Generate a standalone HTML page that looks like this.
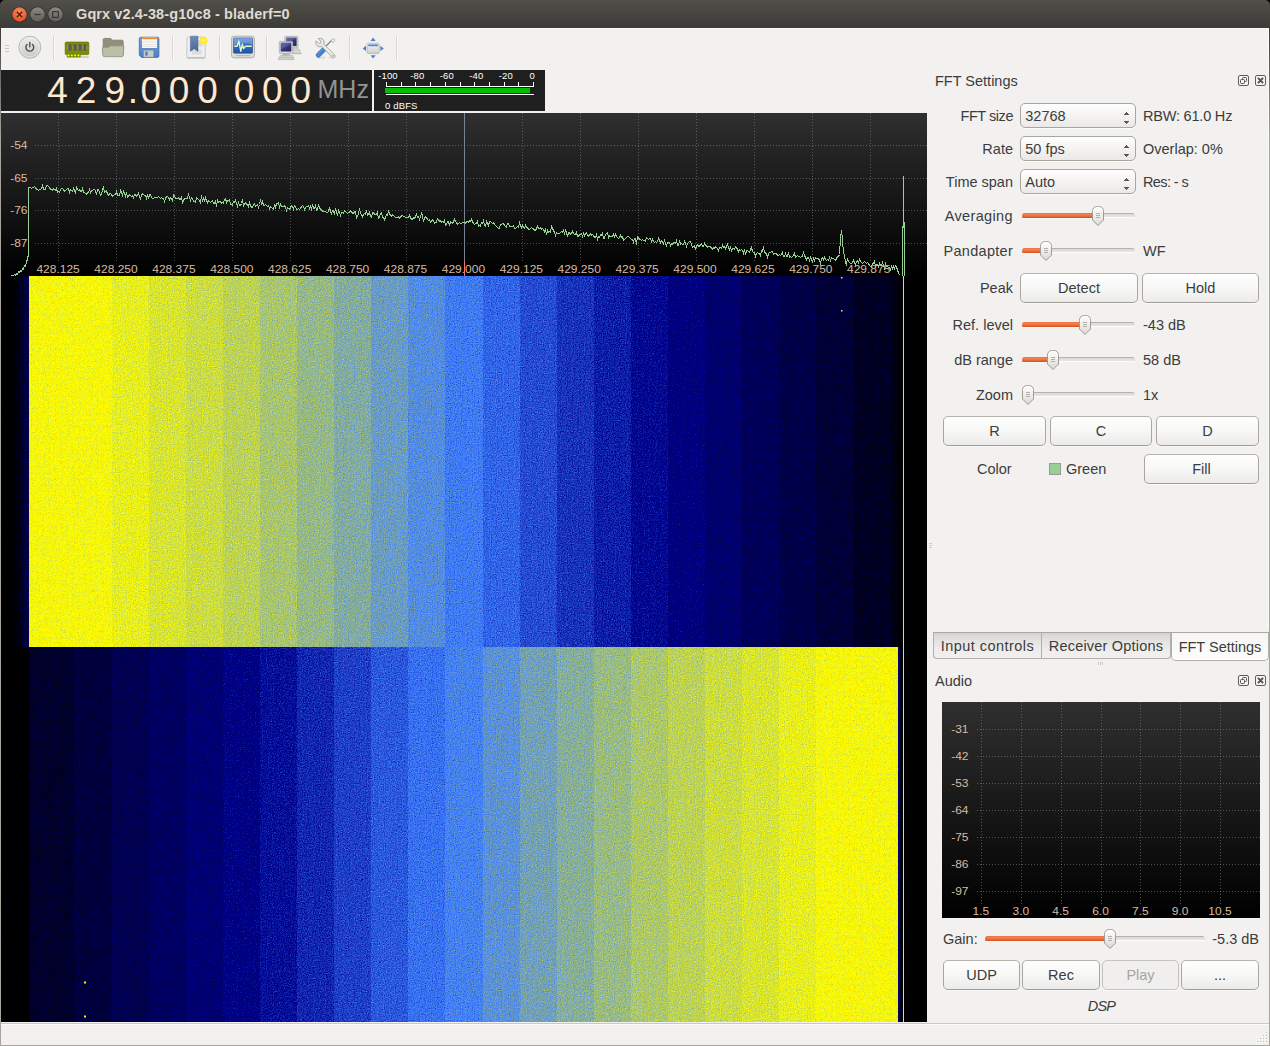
<!DOCTYPE html>
<html><head><meta charset="utf-8"><title>Gqrx v2.4-38-g10c8 - bladerf=0</title>
<style>
html,body{margin:0;padding:0}
body{width:1270px;height:1046px;position:relative;overflow:hidden;background:#f2f1f0;font-family:"Liberation Sans",sans-serif;font-size:14.5px;color:#3c3c3c}
.abs{position:absolute}
#titlebar{left:0;top:0;width:1270px;height:28px;background:linear-gradient(#504f49,#3c3b37);border-radius:5px 5px 0 0;box-shadow:0 1px 0 #fbfbfa}
#corn{left:0;top:0;width:1270px;height:8px;background:#000}
#title{left:76px;top:5.5px;color:#dfdbd2;font-weight:bold;font-size:14.5px;white-space:nowrap;letter-spacing:0.1px}
#freq{left:1px;top:70px;width:371px;height:41px;background:#1f1f1f}
.dg{top:0;width:30px;text-align:center;font-size:37px;line-height:41px;color:#ffe8cf}
#mhz{left:316.5px;top:0;font-size:25px;line-height:39px;color:#939393}
#meter{left:374px;top:70px;width:171px;height:41px;background:#1f1f1f}
.mt{font-family:"Liberation Sans",sans-serif;font-size:9.5px;letter-spacing:0.15px;fill:#fff}
.lb{line-height:20px;white-space:nowrap}
.combo{border:1px solid #a9a6a0;border-radius:5px;background:linear-gradient(#fefefe,#ebe9e7);box-shadow:0 1px 0 #fbfbfa}
.btn{border:1px solid #aaa7a1;border-top-color:#b6b3ad;border-bottom-color:#a09d97;border-radius:5px;background:linear-gradient(#fefefe 0%,#f7f7f6 50%,#ecebea 100%);text-align:center;box-shadow:0 1px 0 rgba(255,255,255,.6)}
.btn.dis{color:#a6a5a3;border-color:#c6c3be;background:#f0efed}
.grv{height:6px;border-radius:3px;background:linear-gradient(#b6b3ad 0,#b6b3ad 1px,#dbd9d5 1px,#e7e5e2 4px,#fcfcfb 4px,#fcfcfb 5px,#f5f4f3 5px)}
.grf{height:6px;border-radius:3px 0 0 3px;background:linear-gradient(#ea7445 0,#f0804f 1.500px,#ec7040 3px,#d24e1a 5px,#fcfcfb 5px,#f8f7f6 6px)}
.tab{border:1px solid #b2afa9;border-top:none;background:linear-gradient(#d6d3cf 0%,#e3e1de 25%,#efeeec 70%,#f1f0ee 100%);text-align:center;line-height:26px;white-space:nowrap}
.tabsel{border:1px solid #b2afa9;border-top:none;border-radius:0 0 5px 5px;background:linear-gradient(#f5f5f4,#fdfdfd);text-align:center;line-height:28px;white-space:nowrap}
</style></head><body>
<div id="corn" class="abs"></div><div id="titlebar" class="abs"></div>
<div id="title" class="abs">Gqrx v2.4-38-g10c8 - bladerf=0</div>

<svg class="abs" style="left:0;top:0" width="640" height="70" viewBox="0 0 640 70">
<defs>
<radialGradient id="gClose" cx="0.5" cy="0.3" r="0.8"><stop offset="0" stop-color="#f58a5e"/><stop offset="1" stop-color="#df4a1b"/></radialGradient>
<linearGradient id="gBtn" x1="0" y1="0" x2="0" y2="1"><stop offset="0" stop-color="#8a8983"/><stop offset="1" stop-color="#5f5e58"/></linearGradient>
<linearGradient id="gPow" x1="0" y1="0" x2="0" y2="1"><stop offset="0" stop-color="#ececec"/><stop offset="1" stop-color="#c9c9c9"/></linearGradient>
<linearGradient id="gFlop" x1="0" y1="0" x2="0" y2="1"><stop offset="0" stop-color="#74a3dc"/><stop offset="1" stop-color="#4c7ec2"/></linearGradient>
<linearGradient id="gScr" x1="0" y1="0" x2="0" y2="1"><stop offset="0" stop-color="#5b8ddb"/><stop offset="0.45" stop-color="#3468bf"/><stop offset="1" stop-color="#2456a8"/></linearGradient>
<linearGradient id="gRib" x1="0" y1="0" x2="0" y2="1"><stop offset="0" stop-color="#6f8db6"/><stop offset="1" stop-color="#4a6892"/></linearGradient>
<linearGradient id="gPc" x1="0" y1="0" x2="1" y2="1"><stop offset="0" stop-color="#5a59a0"/><stop offset="0.5" stop-color="#37367a"/><stop offset="1" stop-color="#24245c"/></linearGradient>
<radialGradient id="gStar"><stop offset="0" stop-color="#fffbd0"/><stop offset="0.35" stop-color="#ffee3a"/><stop offset="0.8" stop-color="#ffe92e"/><stop offset="1" stop-color="#ffe92e" stop-opacity="0"/></radialGradient>
<linearGradient id="gWin" x1="0" y1="0" x2="0" y2="1"><stop offset="0" stop-color="#f4f4f4"/><stop offset="1" stop-color="#d0d0d0"/></linearGradient>
</defs>
<!-- window buttons -->
<circle cx="19.5" cy="14.5" r="8" fill="#33322d"/><circle cx="19.5" cy="14.5" r="7.2" fill="url(#gClose)"/>
<path d="M16.8 11.8l5.4 5.4M22.2 11.8l-5.4 5.4" stroke="#4a1e0c" stroke-width="1.3" fill="none"/>
<circle cx="37.5" cy="14.5" r="8" fill="#33322d"/><circle cx="37.5" cy="14.5" r="7.2" fill="url(#gBtn)"/>
<path d="M34.3 14.5h6.4" stroke="#3a3935" stroke-width="1.3"/>
<circle cx="55.5" cy="14.5" r="8" fill="#33322d"/><circle cx="55.5" cy="14.5" r="7.2" fill="url(#gBtn)"/>
<rect x="52.6" y="11.6" width="5.8" height="5.8" fill="none" stroke="#3a3935" stroke-width="1.2"/>
<!-- grip -->
<rect x="5" y="45" width="4" height="1" fill="#c9c6c0"/><rect x="5" y="48" width="4" height="1" fill="#c9c6c0"/><rect x="5" y="51" width="4" height="1" fill="#c9c6c0"/>
<!-- power -->
<circle cx="29.8" cy="47.3" r="11" fill="url(#gPow)" stroke="#b9b9b2" stroke-width="1"/>
<circle cx="29.8" cy="47.3" r="9.6" fill="none" stroke="#f4f4f4" stroke-width="0.8" opacity=".7"/>
<path d="M27.100 44.400a3.900 3.900 0 1 0 5.400 0" fill="none" stroke="#4d4d4d" stroke-width="1.400" stroke-linecap="round"/>
<path d="M29.800 42.400v4.400" stroke="#4d4d4d" stroke-width="1.400" stroke-linecap="round"/>
<!-- separators -->
<g fill="#d8d5d0"><rect x="53" y="36" width="1" height="24"/><rect x="172" y="36" width="1" height="24"/><rect x="219" y="36" width="1" height="24"/><rect x="266" y="36" width="1" height="24"/><rect x="349" y="36" width="1" height="24"/><rect x="396" y="36" width="1" height="24"/></g>
<g fill="#fbfbfa"><rect x="54" y="36" width="1" height="24"/><rect x="173" y="36" width="1" height="24"/><rect x="220" y="36" width="1" height="24"/><rect x="267" y="36" width="1" height="24"/><rect x="350" y="36" width="1" height="24"/><rect x="397" y="36" width="1" height="24"/></g>
<!-- RAM -->
<rect x="67" y="56" width="22" height="2" rx="1" fill="#c8c8c4" opacity=".8"/>
<rect x="65.2" y="42.1" width="23.6" height="12.5" rx="1.2" fill="#7c8a04" stroke="#6a7700" stroke-width=".8"/>
<rect x="66.8" y="53.5" width="13.8" height="3.8" fill="#6f7d00"/>
<g fill="#5a5a55"><rect x="68.2" y="44.3" width="3.4" height="6.4" rx=".8"/><rect x="73.2" y="44.3" width="3.4" height="6.4" rx=".8"/><rect x="78.2" y="44.3" width="3.4" height="6.4" rx=".8"/><rect x="83.2" y="44.3" width="3.4" height="6.4" rx=".8"/></g>
<g fill="#9a9a94"><rect x="67.6" y="45.5" width=".8" height="4"/><rect x="72.6" y="45.5" width=".8" height="4"/><rect x="77.6" y="45.5" width=".8" height="4"/><rect x="82.6" y="45.5" width=".8" height="4"/><rect x="86.4" y="45.5" width=".8" height="4"/></g>
<g fill="#e6ff00"><circle cx="68.5" cy="55.4" r="1.1"/><circle cx="71.8" cy="55.4" r="1.1"/><circle cx="75.1" cy="55.4" r="1.1"/><circle cx="78.4" cy="55.4" r="1.1"/></g>
<!-- folder -->
<path d="M103.2 39.6q0-1.2 1.2-1.2h6.4l1.6 1.8h9.6q1.2 0 1.2 1.2v13.6h-20z" fill="#8f917b" stroke="#787a66" stroke-width=".8"/>
<path d="M102.3 48.2q0-1 1-1h5.6l1.4-1.4h12.6q1.1 0 1 1.1l-.7 8.6q-.1 1.2-1.3 1.2h-17.6q-1.2 0-1.3-1.2z" fill="#bcbfa8" stroke="#8c8e78" stroke-width=".8"/>
<!-- floppy -->
<path d="M139.3 38.6q0-1.4 1.4-1.4h16.8q1.4 0 1.4 1.4v17.4q0 1.4-1.4 1.4h-15.8l-2.4-2.2z" fill="url(#gFlop)" stroke="#3f6aa8" stroke-width=".8"/>
<rect x="142" y="37.4" width="15" height="10.6" fill="#fafafa"/>
<rect x="142" y="37.4" width="15" height="1.8" fill="#f0891c"/>
<rect x="142" y="41.6" width="15" height=".7" fill="#d8d8d8"/><rect x="142" y="44" width="15" height=".7" fill="#d8d8d8"/><rect x="142" y="46.2" width="15" height=".7" fill="#d8d8d8"/>
<rect x="143.8" y="50.4" width="9.6" height="6.6" fill="#c9cbc6" stroke="#9fa19c" stroke-width=".5"/>
<rect x="145.3" y="51.6" width="2.4" height="4" fill="#4c7ec2"/>
<!-- bookmark -->
<rect x="186.9" y="37.2" width="18.3" height="21" rx="1" fill="#efefef" stroke="#c4c4c4" stroke-width=".9"/>
<rect x="187" y="57" width="18" height="1.4" fill="#c0c0c0"/>
<rect x="198" y="40" width="4.5" height="7" fill="#dcdcdc"/><rect x="192" y="49.5" width="9.5" height="5" fill="#dcdcdc"/>
<path d="M190.4 36.2h7.6v15.2l-3.8-2.6-3.8 2.6z" fill="url(#gRib)" stroke="#4a6892" stroke-width=".5"/>
<circle cx="203.6" cy="40.6" r="4.4" fill="url(#gStar)"/>
<!-- monitor -->
<rect x="231.6" y="36.2" width="22.8" height="21.6" rx="2.2" fill="#dedede" stroke="#a9a9a5" stroke-width=".9"/>
<rect x="233.5" y="38" width="19" height="15.2" rx=".8" fill="url(#gScr)" stroke="#1f4a94" stroke-width=".6"/>
<path d="M233.600 38.100h18.800v6.500q-9.400-3-18.800 1z" fill="#fff" opacity=".22"/><path d="M234.200 46.300h2.900l1.800-5.200 1.900 10.200 1.600-7.100 1.200 4.400 1.900-2.300h6.300" fill="none" stroke="#dcf9c6" stroke-width="1.400" stroke-linejoin="round"/>
<rect x="236" y="55" width="14" height="1.2" fill="#b8b8b4"/>
<!-- network pcs -->
<rect x="284.8" y="36.4" width="13.2" height="11.4" rx=".8" fill="#d8d8d4" stroke="#a4a4a0" stroke-width=".7"/>
<rect x="286.200" y="37.600" width="10.400" height="8.400" fill="url(#gPc)"/><path d="M286.200 43.500l10.400-5v-.9h-10.400z" fill="#8584c4" opacity=".35"/>
<path d="M292.800 48h4.400l3.400 2.600h-7.800z" fill="#d6d6d2" stroke="#a4a4a0" stroke-width=".5"/><path d="M293 52.200h7.500l1 1.800h-8.500z" fill="#d0d0cc" stroke="#a8a8a4" stroke-width=".5"/>
<rect x="279.3" y="41.4" width="13.4" height="12" rx=".8" fill="#dcdcd8" stroke="#a4a4a0" stroke-width=".7"/>
<rect x="280.700" y="42.700" width="10.600" height="8.800" fill="url(#gPc)"/><path d="M280.700 49.500l10.600-5.500v-1.300h-10.600z" fill="#8584c4" opacity=".35"/>
<rect x="282.5" y="53.6" width="7" height="1.6" fill="#b4b4b0"/>
<path d="M280.4 55.4h12l1.8 4.2h-16.2z" fill="#d4d4d0" stroke="#a4a4a0" stroke-width=".6"/>
<path d="M279.6 57.4h13.6" stroke="#aaa" stroke-width=".6"/>
<!-- tools -->
<ellipse cx="321" cy="57.600" rx="4.500" ry="1" fill="#c9c8c4" opacity=".6"/><ellipse cx="332" cy="57.600" rx="3.500" ry="1" fill="#c9c8c4" opacity=".6"/>
<path d="M323.800 48.300l7.900-7.900" stroke="#7d7f7b" stroke-width="1.300" fill="none"/>
<path d="M331 40.300l2.800-1.700 1.200 1.200-1.700 2.800z" fill="#f4f5f3" stroke="#8e908c" stroke-width=".6" stroke-linejoin="round"/>
<g transform="translate(320,42.600) rotate(45)"><path d="M-4.030-1.500A4.300 4.300 0 0 1 3.990-1.600L19-1.600A1.600 1.600 0 0 1 19 1.600L3.990 1.600A4.300 4.300 0 0 1-4.030 1.500L-.800 1.500A1.500 1.500 0 0 0-.800-1.500Z" fill="#e6e8e4" stroke="#9b9d99" stroke-width=".8" stroke-linejoin="round"/><circle cx="18.400" cy="0" r=".7" fill="#a5a7a3"/><path d="M5 -.5H16" stroke="#fff" stroke-width=".8" opacity=".7"/></g>
<path d="M322.300 48.100l3 3-5.300 5.500a2.200 2.200 0 0 1-3.300-2.900z" fill="#4383d2" stroke="#2f66b0" stroke-width=".8" stroke-linejoin="round"/>
<path d="M318.200 53.600l4-4.200" stroke="#7fb0ea" stroke-width=".9" stroke-linecap="round" opacity=".7"/>
<!-- fullscreen -->
<rect x="367" y="43.200" width="12.200" height="10.200" rx="1" fill="url(#gWin)" stroke="#b4b4b0" stroke-width=".8"/>
<rect x="368.200" y="44.400" width="9.800" height="1.800" fill="#5a88cc"/>
<g fill="#4f80c6"><path d="M373.100 37.600l2.600 3.400h-5.200z"/><path d="M373.100 58.600l2.600-3.400h-5.200z"/><path d="M362.600 48.400l3.400-2.600v5.200z"/><path d="M383.800 48.400l-3.400-2.600v5.200z"/></g>
</svg>

<div id="freq" class="abs"><span class="abs dg" style="left:41.5px">4</span><span class="abs dg" style="left:70.0px">2</span><span class="abs dg" style="left:98.7px">9</span><span class="abs dg" style="left:117.0px">.</span><span class="abs dg" style="left:134.7px">0</span><span class="abs dg" style="left:163.0px">0</span><span class="abs dg" style="left:191.5px">0</span><span class="abs dg" style="left:228.0px">0</span><span class="abs dg" style="left:256.4px">0</span><span class="abs dg" style="left:284.7px">0</span><span class="abs" id="mhz">MHz</span></div>
<div id="meter" class="abs"><svg width="171" height="41" viewBox="374 70 171 41" style="position:absolute;left:0;top:0"><rect x="386" y="82" width="1" height="5" fill="#fff"/><rect x="401" y="82" width="1" height="5" fill="#fff"/><rect x="415" y="82" width="1" height="5" fill="#fff"/><rect x="430" y="82" width="1" height="5" fill="#fff"/><rect x="445" y="82" width="1" height="5" fill="#fff"/><rect x="460" y="82" width="1" height="5" fill="#fff"/><rect x="474" y="82" width="1" height="5" fill="#fff"/><rect x="489" y="82" width="1" height="5" fill="#fff"/><rect x="504" y="82" width="1" height="5" fill="#fff"/><rect x="518" y="82" width="1" height="5" fill="#fff"/><rect x="533" y="82" width="1" height="5" fill="#fff"/><rect x="386" y="86" width="148" height="1" fill="#fff"/><rect x="385" y="88" width="145" height="5" fill="#00c000"/><rect x="386" y="94" width="148" height="1" fill="#fff"/><text x="388.0" y="78.6" text-anchor="middle" class="mt">-100</text><text x="417.4" y="78.6" text-anchor="middle" class="mt">-80</text><text x="446.9" y="78.6" text-anchor="middle" class="mt">-60</text><text x="476.3" y="78.6" text-anchor="middle" class="mt">-40</text><text x="505.8" y="78.6" text-anchor="middle" class="mt">-20</text><text x="532.2" y="78.6" text-anchor="middle" class="mt">0</text><text x="385" y="109" class="mt">0 dBFS</text></svg></div>
<svg class="abs" style="left:0;top:0" width="1270" height="1046" viewBox="0 0 1270 1046">
<defs>
<filter id="wfF" x="0" y="0" width="1" height="1" filterUnits="objectBoundingBox" color-interpolation-filters="sRGB">
<feTurbulence type="fractalNoise" baseFrequency="0.83" numOctaves="2" seed="3" result="t"/>
<feColorMatrix in="t" type="matrix" values=".3333 .3333 .3333 0 0  .3333 .3333 .3333 0 0  .3333 .3333 .3333 0 0  0 0 0 0 1" result="n"/>
<feComposite in="SourceGraphic" in2="n" operator="arithmetic" k1="0" k2="1" k3="0.24" k4="-0.12" result="m"/>
<feComponentTransfer in="m">
<feFuncR type="table" tableValues="0.0000 0.0000 0.0000 0.0000 0.0000 0.0000 0.0000 0.0000 0.0000 0.0000 0.0000 0.0000 0.0000 0.0000 0.0000 0.0392 0.0784 0.1176 0.1569 0.1961 0.2353 0.3118 0.3882 0.4647 0.5412 0.6176 0.6941 0.7706 0.8471 0.9235 1.0000 1.0000 1.0000 1.0000 1.0000 1.0000 1.0000 1.0000 1.0000 1.0000 1.0000 1.0000 1.0000 1.0000 1.0000 1.0000 1.0000 1.0000 1.0000 1.0000 1.0000 1.0000"/>
<feFuncG type="table" tableValues="0.0000 0.0000 0.0000 0.0000 0.0000 0.0000 0.0000 0.0000 0.0000 0.0000 0.0000 0.0000 0.0000 0.0000 0.0000 0.0817 0.1634 0.2451 0.3268 0.4085 0.4902 0.5412 0.5922 0.6431 0.6941 0.7451 0.7961 0.8471 0.8980 0.9490 1.0000 0.9500 0.9000 0.8500 0.8000 0.7500 0.7000 0.6500 0.6000 0.5500 0.5000 0.4500 0.4000 0.3500 0.3000 0.2500 0.2000 0.1500 0.1000 0.0500 0.0000 1.0000"/>
<feFuncB type="table" tableValues="0.0000 0.0000 0.0000 0.0000 0.0000 0.0549 0.1098 0.1647 0.2196 0.2745 0.3294 0.3843 0.4392 0.4941 0.5490 0.6242 0.6993 0.7745 0.8497 0.9248 1.0000 0.9000 0.8000 0.7000 0.6000 0.5000 0.4000 0.3000 0.2000 0.1000 0.0000 0.0000 0.0000 0.0000 0.0000 0.0000 0.0000 0.0000 0.0000 0.0000 0.0000 0.0000 0.0000 0.0000 0.0000 0.0000 0.0000 0.0000 0.0000 0.0000 0.0000 1.0000"/>
</feComponentTransfer>
</filter>
<linearGradient id="glowL" x1="0" y1="0" x2="1" y2="0"><stop offset="0" stop-color="#0d0d0d"/><stop offset="0.5" stop-color="#1c1c1c"/><stop offset="1" stop-color="#323232"/></linearGradient><linearGradient id="glowR" x1="0" y1="0" x2="1" y2="0"><stop offset="0" stop-color="#464646"/><stop offset="1" stop-color="#161616"/></linearGradient>
<linearGradient id="pbg" x1="0" y1="0" x2="0" y2="1"><stop offset="0" stop-color="#2f2f2f"/><stop offset="1" stop-color="#000"/></linearGradient>
<style>.grid{stroke:#8a8a8a;stroke-width:1;stroke-dasharray:1 2;opacity:.55}.pl{font-family:"Liberation Sans",sans-serif;font-size:12px;fill:#d8baa1}</style>
</defs>
<g filter="url(#wfF)" shape-rendering="crispEdges">
<rect x="1" y="276" width="926" height="746" fill="#0d0d0d"/>
<rect x="29" y="276" width="45" height="371" fill="#949494"/>
<rect x="74" y="276" width="38" height="371" fill="#949494"/>
<rect x="112" y="276" width="37" height="371" fill="#909090"/>
<rect x="149" y="276" width="37" height="371" fill="#8c8c8c"/>
<rect x="186" y="276" width="37" height="371" fill="#898989"/>
<rect x="223" y="276" width="37" height="371" fill="#858585"/>
<rect x="260" y="276" width="37" height="371" fill="#808080"/>
<rect x="297" y="276" width="37" height="371" fill="#7b7b7b"/>
<rect x="334" y="276" width="37" height="371" fill="#767676"/>
<rect x="371" y="276" width="37" height="371" fill="#707070"/>
<rect x="408" y="276" width="37" height="371" fill="#6a6a6a"/>
<rect x="445" y="276" width="38" height="371" fill="#646464"/>
<rect x="483" y="276" width="37" height="371" fill="#5e5e5e"/>
<rect x="520" y="276" width="37" height="371" fill="#585858"/>
<rect x="557" y="276" width="37" height="371" fill="#525252"/>
<rect x="594" y="276" width="37" height="371" fill="#4d4d4d"/>
<rect x="631" y="276" width="37" height="371" fill="#474747"/>
<rect x="668" y="276" width="37" height="371" fill="#414141"/>
<rect x="705" y="276" width="37" height="371" fill="#3b3b3b"/>
<rect x="742" y="276" width="37" height="371" fill="#343434"/>
<rect x="779" y="276" width="37" height="371" fill="#2e2e2e"/>
<rect x="816" y="276" width="38" height="371" fill="#282828"/>
<rect x="854" y="276" width="37" height="371" fill="#212121"/>
<rect x="891" y="276" width="7" height="371" fill="#1b1b1b"/>
<rect x="29" y="647" width="45" height="375" fill="#242424"/>
<rect x="74" y="647" width="38" height="375" fill="#2a2a2a"/>
<rect x="112" y="647" width="37" height="375" fill="#313131"/>
<rect x="149" y="647" width="37" height="375" fill="#373737"/>
<rect x="186" y="647" width="37" height="375" fill="#3d3d3d"/>
<rect x="223" y="647" width="37" height="375" fill="#434343"/>
<rect x="260" y="647" width="37" height="375" fill="#494949"/>
<rect x="297" y="647" width="37" height="375" fill="#4f4f4f"/>
<rect x="334" y="647" width="37" height="375" fill="#555555"/>
<rect x="371" y="647" width="37" height="375" fill="#5b5b5b"/>
<rect x="408" y="647" width="37" height="375" fill="#616161"/>
<rect x="445" y="647" width="38" height="375" fill="#666666"/>
<rect x="483" y="647" width="37" height="375" fill="#6c6c6c"/>
<rect x="520" y="647" width="37" height="375" fill="#727272"/>
<rect x="557" y="647" width="37" height="375" fill="#777777"/>
<rect x="594" y="647" width="37" height="375" fill="#7c7c7c"/>
<rect x="631" y="647" width="37" height="375" fill="#818181"/>
<rect x="668" y="647" width="37" height="375" fill="#858585"/>
<rect x="705" y="647" width="37" height="375" fill="#898989"/>
<rect x="742" y="647" width="37" height="375" fill="#8c8c8c"/>
<rect x="779" y="647" width="37" height="375" fill="#909090"/>
<rect x="816" y="647" width="38" height="375" fill="#949494"/>
<rect x="854" y="647" width="37" height="375" fill="#949494"/>
<rect x="891" y="647" width="7" height="375" fill="#949494"/>
<rect x="9" y="276" width="20" height="371" fill="url(#glowL)"/>
<rect x="898" y="647" width="3" height="375" fill="url(#glowR)"/>
</g>
<g>
<rect x="1" y="113" width="926" height="163" fill="url(#pbg)"/>
<line x1="58.5" y1="113" x2="58.5" y2="262" class="grid"/>
<line x1="116.5" y1="113" x2="116.5" y2="262" class="grid"/>
<line x1="174.5" y1="113" x2="174.5" y2="262" class="grid"/>
<line x1="232.5" y1="113" x2="232.5" y2="262" class="grid"/>
<line x1="290.5" y1="113" x2="290.5" y2="262" class="grid"/>
<line x1="348.5" y1="113" x2="348.5" y2="262" class="grid"/>
<line x1="406.5" y1="113" x2="406.5" y2="262" class="grid"/>
<line x1="464.5" y1="113" x2="464.5" y2="262" class="grid"/>
<line x1="522.5" y1="113" x2="522.5" y2="262" class="grid"/>
<line x1="580.5" y1="113" x2="580.5" y2="262" class="grid"/>
<line x1="638.5" y1="113" x2="638.5" y2="262" class="grid"/>
<line x1="696.5" y1="113" x2="696.5" y2="262" class="grid"/>
<line x1="754.5" y1="113" x2="754.5" y2="262" class="grid"/>
<line x1="812.5" y1="113" x2="812.5" y2="262" class="grid"/>
<line x1="870.5" y1="113" x2="870.5" y2="262" class="grid"/>
<line x1="35" y1="145.5" x2="927" y2="145.5" class="grid"/>
<line x1="35" y1="178.5" x2="927" y2="178.5" class="grid"/>
<line x1="35" y1="210.5" x2="927" y2="210.5" class="grid"/>
<line x1="35" y1="243.5" x2="927" y2="243.5" class="grid"/>
<text transform="translate(27.5,149.2) scale(1,.93)" text-anchor="end" class="pl">-54</text>
<text transform="translate(27.5,182.2) scale(1,.93)" text-anchor="end" class="pl">-65</text>
<text transform="translate(27.5,214.2) scale(1,.93)" text-anchor="end" class="pl">-76</text>
<text transform="translate(27.5,247.2) scale(1,.93)" text-anchor="end" class="pl">-87</text>
<text transform="translate(58.1,273.2) scale(1,.93)" text-anchor="middle" class="pl">428.125</text>
<text transform="translate(116.0,273.2) scale(1,.93)" text-anchor="middle" class="pl">428.250</text>
<text transform="translate(173.9,273.2) scale(1,.93)" text-anchor="middle" class="pl">428.375</text>
<text transform="translate(231.8,273.2) scale(1,.93)" text-anchor="middle" class="pl">428.500</text>
<text transform="translate(289.7,273.2) scale(1,.93)" text-anchor="middle" class="pl">428.625</text>
<text transform="translate(347.6,273.2) scale(1,.93)" text-anchor="middle" class="pl">428.750</text>
<text transform="translate(405.5,273.2) scale(1,.93)" text-anchor="middle" class="pl">428.875</text>
<text transform="translate(463.4,273.2) scale(1,.93)" text-anchor="middle" class="pl">429.000</text>
<text transform="translate(521.3,273.2) scale(1,.93)" text-anchor="middle" class="pl">429.125</text>
<text transform="translate(579.2,273.2) scale(1,.93)" text-anchor="middle" class="pl">429.250</text>
<text transform="translate(637.1,273.2) scale(1,.93)" text-anchor="middle" class="pl">429.375</text>
<text transform="translate(695.0,273.2) scale(1,.93)" text-anchor="middle" class="pl">429.500</text>
<text transform="translate(752.9,273.2) scale(1,.93)" text-anchor="middle" class="pl">429.625</text>
<text transform="translate(810.8,273.2) scale(1,.93)" text-anchor="middle" class="pl">429.750</text>
<text transform="translate(868.7,273.2) scale(1,.93)" text-anchor="middle" class="pl">429.875</text>
<rect x="464" y="113" width="1" height="148" fill="#788296"/>
<rect x="464" y="261" width="1" height="15" fill="#ff7171"/>
<polyline fill="none" stroke="#97d097" stroke-width="1" shape-rendering="crispEdges" points="10.5,275.5 13.5,275.5 14.5,274.5 15.5,275.5 16.5,273.5 17.5,274.5 18.5,271.5 19.5,272.5 20.5,270.5 21.5,271.5 22.5,268.5 23.5,269.5 24.5,265.5 25.5,266.5 26.5,262.5 27.5,258.5 28.5,254.5 28.5,187.5 30.5,187.5 31.5,188.5 32.5,187.5 33.5,187.5 34.5,186.5 35.5,187.5 36.5,189.5 37.5,189.5 38.5,190.5 39.5,189.5 40.5,189.5 41.5,188.5 42.5,185.5 43.5,189.5 44.5,189.5 45.5,189.5 46.5,185.5 47.5,185.5 48.5,186.5 49.5,187.5 50.5,189.5 51.5,189.5 52.5,190.5 53.5,188.5 54.5,189.5 55.5,190.5 56.5,188.5 57.5,192.5 58.5,191.5 59.5,192.5 60.5,189.5 61.5,188.5 62.5,188.5 63.5,189.5 64.5,191.5 65.5,190.5 66.5,189.5 67.5,188.5 68.5,188.5 69.5,192.5 70.5,189.5 71.5,190.5 72.5,191.5 73.5,188.5 74.5,190.5 75.5,193.5 76.5,187.5 77.5,189.5 78.5,190.5 79.5,189.5 80.5,191.5 81.5,191.5 82.5,188.5 83.5,192.5 84.5,192.5 85.5,193.5 86.5,194.5 87.5,192.5 88.5,192.5 89.5,189.5 90.5,192.5 91.5,190.5 92.5,190.5 93.5,189.5 94.5,189.5 95.5,190.5 96.5,194.5 97.5,189.5 98.5,189.5 99.5,192.5 100.5,195.5 101.5,194.5 102.5,189.5 103.5,187.5 104.5,192.5 105.5,191.5 106.5,190.5 107.5,194.5 108.5,195.5 109.5,193.5 110.5,193.5 111.5,194.5 112.5,196.5 113.5,195.5 114.5,194.5 115.5,194.5 116.5,191.5 117.5,195.5 118.5,195.5 119.5,195.5 120.5,190.5 121.5,192.5 122.5,195.5 123.5,191.5 124.5,193.5 125.5,196.5 126.5,192.5 127.5,197.5 128.5,196.5 129.5,194.5 130.5,195.5 131.5,196.5 132.5,195.5 133.5,197.5 134.5,194.5 135.5,194.5 136.5,196.5 137.5,195.5 138.5,193.5 139.5,196.5 140.5,198.5 141.5,195.5 142.5,193.5 143.5,194.5 144.5,195.5 145.5,195.5 146.5,198.5 147.5,194.5 148.5,198.5 149.5,194.5 150.5,194.5 151.5,197.5 152.5,198.5 153.5,198.5 154.5,197.5 155.5,197.5 156.5,197.5 157.5,197.5 158.5,196.5 159.5,197.5 160.5,198.5 161.5,197.5 162.5,198.5 163.5,198.5 164.5,201.5 165.5,198.5 166.5,196.5 167.5,196.5 168.5,197.5 169.5,199.5 170.5,197.5 171.5,198.5 172.5,201.5 173.5,194.5 174.5,195.5 175.5,198.5 176.5,198.5 177.5,198.5 178.5,197.5 179.5,199.5 180.5,199.5 181.5,197.5 182.5,202.5 183.5,200.5 184.5,198.5 185.5,198.5 186.5,198.5 187.5,198.5 188.5,194.5 189.5,197.5 190.5,200.5 191.5,197.5 192.5,198.5 193.5,201.5 194.5,201.5 195.5,202.5 196.5,197.5 197.5,198.5 198.5,199.5 199.5,200.5 200.5,202.5 201.5,195.5 202.5,201.5 203.5,197.5 204.5,201.5 205.5,197.5 206.5,200.5 207.5,202.5 208.5,200.5 209.5,201.5 210.5,202.5 211.5,201.5 212.5,200.5 213.5,203.5 214.5,203.5 215.5,201.5 216.5,206.5 217.5,200.5 218.5,202.5 219.5,201.5 220.5,201.5 221.5,203.5 222.5,202.5 223.5,203.5 224.5,199.5 225.5,198.5 226.5,202.5 227.5,200.5 228.5,200.5 229.5,199.5 230.5,204.5 231.5,204.5 232.5,205.5 233.5,201.5 234.5,202.5 235.5,200.5 236.5,203.5 237.5,206.5 238.5,202.5 239.5,205.5 240.5,205.5 241.5,203.5 242.5,199.5 243.5,205.5 244.5,203.5 245.5,202.5 246.5,204.5 247.5,204.5 248.5,206.5 249.5,202.5 250.5,205.5 251.5,207.5 252.5,207.5 253.5,204.5 254.5,203.5 255.5,206.5 256.5,205.5 257.5,204.5 258.5,207.5 259.5,204.5 260.5,200.5 261.5,203.5 262.5,201.5 263.5,205.5 264.5,205.5 265.5,204.5 266.5,205.5 267.5,206.5 268.5,205.5 269.5,208.5 270.5,206.5 271.5,207.5 272.5,208.5 273.5,209.5 274.5,205.5 275.5,207.5 276.5,203.5 277.5,203.5 278.5,202.5 279.5,207.5 280.5,204.5 281.5,206.5 282.5,206.5 283.5,206.5 284.5,205.5 285.5,207.5 286.5,210.5 287.5,207.5 288.5,208.5 289.5,209.5 290.5,207.5 291.5,205.5 292.5,206.5 293.5,209.5 294.5,205.5 295.5,206.5 296.5,209.5 297.5,209.5 298.5,208.5 299.5,209.5 300.5,208.5 301.5,206.5 302.5,205.5 303.5,206.5 304.5,209.5 305.5,207.5 306.5,206.5 307.5,206.5 308.5,205.5 309.5,208.5 310.5,206.5 311.5,209.5 312.5,204.5 313.5,208.5 314.5,208.5 315.5,205.5 316.5,210.5 317.5,209.5 318.5,205.5 319.5,207.5 320.5,209.5 321.5,209.5 322.5,211.5 323.5,211.5 324.5,211.5 325.5,211.5 326.5,212.5 327.5,212.5 328.5,211.5 329.5,207.5 330.5,211.5 331.5,213.5 332.5,210.5 333.5,210.5 334.5,214.5 335.5,208.5 336.5,211.5 337.5,215.5 338.5,210.5 339.5,212.5 340.5,215.5 341.5,212.5 342.5,212.5 343.5,213.5 344.5,210.5 345.5,211.5 346.5,212.5 347.5,213.5 348.5,212.5 349.5,212.5 350.5,210.5 351.5,211.5 352.5,213.5 353.5,213.5 354.5,211.5 355.5,211.5 356.5,217.5 357.5,215.5 358.5,214.5 359.5,208.5 360.5,213.5 361.5,214.5 362.5,216.5 363.5,214.5 364.5,213.5 365.5,214.5 366.5,210.5 367.5,215.5 368.5,214.5 369.5,212.5 370.5,216.5 371.5,217.5 372.5,212.5 373.5,212.5 374.5,214.5 375.5,214.5 376.5,214.5 377.5,212.5 378.5,218.5 379.5,217.5 380.5,213.5 381.5,212.5 382.5,217.5 383.5,217.5 384.5,219.5 385.5,217.5 386.5,214.5 387.5,215.5 388.5,211.5 389.5,213.5 390.5,215.5 391.5,216.5 392.5,214.5 393.5,215.5 394.5,216.5 395.5,217.5 396.5,217.5 397.5,217.5 398.5,216.5 399.5,218.5 400.5,217.5 401.5,215.5 402.5,215.5 403.5,216.5 404.5,216.5 405.5,217.5 406.5,217.5 407.5,217.5 408.5,217.5 409.5,215.5 410.5,217.5 411.5,219.5 412.5,219.5 413.5,217.5 414.5,218.5 415.5,216.5 416.5,214.5 417.5,217.5 418.5,216.5 419.5,219.5 420.5,216.5 421.5,213.5 422.5,215.5 423.5,221.5 424.5,218.5 425.5,216.5 426.5,217.5 427.5,219.5 428.5,220.5 429.5,219.5 430.5,222.5 431.5,221.5 432.5,219.5 433.5,220.5 434.5,223.5 435.5,222.5 436.5,222.5 437.5,218.5 438.5,219.5 439.5,221.5 440.5,220.5 441.5,222.5 442.5,221.5 443.5,222.5 444.5,220.5 445.5,225.5 446.5,224.5 447.5,221.5 448.5,221.5 449.5,225.5 450.5,221.5 451.5,222.5 452.5,223.5 453.5,221.5 454.5,219.5 455.5,221.5 456.5,222.5 457.5,224.5 458.5,223.5 459.5,222.5 460.5,223.5 461.5,223.5 462.5,222.5 463.5,222.5 464.5,222.5 465.5,223.5 466.5,221.5 467.5,221.5 468.5,222.5 469.5,220.5 470.5,221.5 471.5,219.5 472.5,221.5 473.5,223.5 474.5,224.5 475.5,223.5 476.5,223.5 477.5,221.5 478.5,226.5 479.5,225.5 480.5,226.5 481.5,222.5 482.5,223.5 483.5,220.5 484.5,225.5 485.5,226.5 486.5,221.5 487.5,223.5 488.5,225.5 489.5,221.5 490.5,221.5 491.5,222.5 492.5,223.5 493.5,222.5 494.5,224.5 495.5,225.5 496.5,226.5 497.5,227.5 498.5,228.5 499.5,228.5 500.5,224.5 501.5,224.5 502.5,223.5 503.5,223.5 504.5,225.5 505.5,226.5 506.5,227.5 507.5,223.5 508.5,223.5 509.5,226.5 510.5,226.5 511.5,226.5 512.5,226.5 513.5,225.5 514.5,228.5 515.5,228.5 516.5,227.5 517.5,226.5 518.5,227.5 519.5,222.5 520.5,225.5 521.5,227.5 522.5,225.5 523.5,227.5 524.5,228.5 525.5,225.5 526.5,227.5 527.5,227.5 528.5,229.5 529.5,229.5 530.5,228.5 531.5,227.5 532.5,228.5 533.5,228.5 534.5,230.5 535.5,230.5 536.5,228.5 537.5,226.5 538.5,228.5 539.5,228.5 540.5,227.5 541.5,229.5 542.5,228.5 543.5,229.5 544.5,231.5 545.5,229.5 546.5,234.5 547.5,230.5 548.5,232.5 549.5,231.5 550.5,232.5 551.5,226.5 552.5,228.5 553.5,230.5 554.5,232.5 555.5,235.5 556.5,232.5 557.5,233.5 558.5,233.5 559.5,233.5 560.5,232.5 561.5,231.5 562.5,232.5 563.5,230.5 564.5,233.5 565.5,230.5 566.5,232.5 567.5,236.5 568.5,232.5 569.5,232.5 570.5,234.5 571.5,233.5 572.5,231.5 573.5,233.5 574.5,234.5 575.5,234.5 576.5,232.5 577.5,236.5 578.5,236.5 579.5,234.5 580.5,234.5 581.5,233.5 582.5,236.5 583.5,233.5 584.5,235.5 585.5,233.5 586.5,232.5 587.5,235.5 588.5,236.5 589.5,234.5 590.5,233.5 591.5,235.5 592.5,234.5 593.5,235.5 594.5,237.5 595.5,237.5 596.5,234.5 597.5,239.5 598.5,236.5 599.5,237.5 600.5,234.5 601.5,235.5 602.5,232.5 603.5,238.5 604.5,238.5 605.5,234.5 606.5,233.5 607.5,232.5 608.5,237.5 609.5,235.5 610.5,236.5 611.5,236.5 612.5,236.5 613.5,234.5 614.5,236.5 615.5,234.5 616.5,236.5 617.5,237.5 618.5,238.5 619.5,237.5 620.5,235.5 621.5,237.5 622.5,236.5 623.5,240.5 624.5,239.5 625.5,238.5 626.5,237.5 627.5,236.5 628.5,236.5 629.5,237.5 630.5,238.5 631.5,239.5 632.5,239.5 633.5,242.5 634.5,238.5 635.5,238.5 636.5,244.5 637.5,236.5 638.5,237.5 639.5,239.5 640.5,239.5 641.5,240.5 642.5,239.5 643.5,240.5 644.5,240.5 645.5,241.5 646.5,237.5 647.5,238.5 648.5,239.5 649.5,238.5 650.5,238.5 651.5,241.5 652.5,239.5 653.5,241.5 654.5,242.5 655.5,241.5 656.5,242.5 657.5,241.5 658.5,238.5 659.5,240.5 660.5,242.5 661.5,240.5 662.5,241.5 663.5,243.5 664.5,240.5 665.5,243.5 666.5,245.5 667.5,242.5 668.5,242.5 669.5,242.5 670.5,245.5 671.5,243.5 672.5,244.5 673.5,242.5 674.5,242.5 675.5,243.5 676.5,240.5 677.5,245.5 678.5,245.5 679.5,240.5 680.5,244.5 681.5,243.5 682.5,244.5 683.5,244.5 684.5,241.5 685.5,243.5 686.5,246.5 687.5,243.5 688.5,242.5 689.5,241.5 690.5,241.5 691.5,244.5 692.5,247.5 693.5,246.5 694.5,245.5 695.5,249.5 696.5,245.5 697.5,244.5 698.5,246.5 699.5,246.5 700.5,244.5 701.5,243.5 702.5,246.5 703.5,246.5 704.5,243.5 705.5,245.5 706.5,245.5 707.5,247.5 708.5,246.5 709.5,246.5 710.5,246.5 711.5,248.5 712.5,249.5 713.5,247.5 714.5,248.5 715.5,246.5 716.5,247.5 717.5,248.5 718.5,250.5 719.5,247.5 720.5,247.5 721.5,248.5 722.5,245.5 723.5,247.5 724.5,246.5 725.5,248.5 726.5,246.5 727.5,244.5 728.5,247.5 729.5,249.5 730.5,247.5 731.5,250.5 732.5,248.5 733.5,248.5 734.5,249.5 735.5,246.5 736.5,247.5 737.5,249.5 738.5,251.5 739.5,249.5 740.5,250.5 741.5,249.5 742.5,250.5 743.5,253.5 744.5,249.5 745.5,254.5 746.5,250.5 747.5,250.5 748.5,251.5 749.5,252.5 750.5,249.5 751.5,247.5 752.5,251.5 753.5,252.5 754.5,252.5 755.5,256.5 756.5,253.5 757.5,252.5 758.5,253.5 759.5,253.5 760.5,255.5 761.5,250.5 762.5,251.5 763.5,246.5 764.5,252.5 765.5,252.5 766.5,254.5 767.5,257.5 768.5,253.5 769.5,252.5 770.5,252.5 771.5,251.5 772.5,251.5 773.5,254.5 774.5,253.5 775.5,253.5 776.5,253.5 777.5,255.5 778.5,255.5 779.5,254.5 780.5,255.5 781.5,254.5 782.5,252.5 783.5,256.5 784.5,256.5 785.5,253.5 786.5,256.5 787.5,256.5 788.5,252.5 789.5,257.5 790.5,256.5 791.5,257.5 792.5,256.5 793.5,255.5 794.5,253.5 795.5,257.5 796.5,256.5 797.5,255.5 798.5,256.5 799.5,256.5 800.5,257.5 801.5,256.5 802.5,256.5 803.5,252.5 804.5,255.5 805.5,257.5 806.5,259.5 807.5,257.5 808.5,257.5 809.5,260.5 810.5,257.5 811.5,259.5 812.5,261.5 813.5,258.5 814.5,260.5 815.5,257.5 816.5,258.5 817.5,258.5 818.5,258.5 819.5,260.5 820.5,263.5 821.5,258.5 822.5,257.5 823.5,259.5 824.5,257.5 825.5,259.5 826.5,260.5 827.5,259.5 828.5,260.5 829.5,257.5 830.5,260.5 831.5,257.5 832.5,258.5 833.5,258.5 834.5,259.5 835.5,260.5 836.5,258.5 837.5,256.5 838.5,256.5 839.5,254.5 840.5,237.5 841.5,230.5 842.5,239.5 843.5,253.5 844.5,254.5 845.5,262.5 846.5,264.5 847.5,258.5 848.5,261.5 849.5,262.5 850.5,263.5 851.5,263.5 852.5,262.5 853.5,260.5 854.5,262.5 855.5,264.5 856.5,261.5 857.5,260.5 858.5,262.5 859.5,259.5 860.5,261.5 861.5,262.5 862.5,263.5 863.5,262.5 864.5,261.5 865.5,262.5 866.5,263.5 867.5,262.5 868.5,263.5 869.5,265.5 870.5,266.5 871.5,267.5 872.5,263.5 873.5,263.5 874.5,260.5 875.5,267.5 876.5,264.5 877.5,264.5 878.5,266.5 879.5,263.5 880.5,265.5 881.5,265.5 882.5,262.5 883.5,265.5 884.5,268.5 885.5,263.5 886.5,266.5 887.5,266.5 888.5,267.5 889.5,267.5 890.5,269.5 891.5,266.5 892.5,268.5 893.5,266.5 894.5,268.5 895.5,265.5 896.5,266.5 897.5,270.5 898.5,272.5 899.5,275.5"/>
<g fill="#97d097" shape-rendering="crispEdges"><rect x="902" y="226" width="1" height="50"/><rect x="903" y="176" width="1" height="52"/><rect x="904" y="222" width="1" height="54"/></g>
</g>
<rect x="903" y="276" width="1" height="746" fill="#ffe600"/>
<rect x="841" y="277" width="1.5" height="1.5" fill="#ffef00"/><rect x="841" y="310" width="1.5" height="1.5" fill="#ffef00"/>
<rect x="84" y="981.5" width="2" height="2" fill="#fff000"/><rect x="84" y="1015.5" width="2" height="2" fill="#fff000"/>
</svg>
<svg width="0" height="0" style="position:absolute"><defs><linearGradient id="gH" x1="0" y1="0" x2="0" y2="1"><stop offset="0" stop-color="#fdfdfc"/><stop offset="0.6" stop-color="#ebe9e6"/><stop offset="1" stop-color="#d9d6d1"/></linearGradient></defs></svg>
<div class="abs lb" style="left:935px;top:71px;">FFT Settings</div>
<svg class="abs" style="left:1237px;top:74px" width="31" height="13" viewBox="0 0 31 13"><rect x="1.500" y="1.500" width="10" height="10" rx="1.500" fill="#f5f4f3" stroke="#5e5d57" stroke-width="1"/><rect x="5.500" y="3.500" width="4" height="4" rx="1" fill="none" stroke="#55544f" stroke-width="1"/><rect x="3.500" y="5.500" width="4" height="4" rx="1" fill="#f5f4f3" stroke="#55544f" stroke-width="1"/><rect x="18.500" y="1.500" width="10" height="10" rx="1.500" fill="#f5f4f3" stroke="#5e5d57" stroke-width="1"/><path d="M20.900 3.900l5.200 5.200M26.100 3.900l-5.200 5.200" stroke="#55544f" stroke-width="2"/></svg>
<div class="abs lb" style="right:257px;top:106px;letter-spacing:-0.45px">FFT size</div>
<div class="abs combo" style="left:1020px;top:103px;width:114px;height:23px"><span class="abs" style="left:4.3px;top:2px;line-height:20px">32768</span><svg class="abs" style="right:5px;top:8px" width="7" height="13" viewBox="0 0 7 13" shape-rendering="crispEdges"><path d="M3 0h1v1h1v1h1v1h-5v-1h1v-1h1z" fill="#585858"/><path d="M1 9h5v1h-1v1h-1v1h-1v-1h-1v-1h-1z" fill="#585858"/></svg></div>
<div class="abs lb" style="left:1143px;top:106px;letter-spacing:-0.2px">RBW: 61.0 Hz</div>
<div class="abs lb" style="right:257px;top:139px;">Rate</div>
<div class="abs combo" style="left:1020px;top:136px;width:114px;height:23px"><span class="abs" style="left:4.3px;top:2px;line-height:20px">50 fps</span><svg class="abs" style="right:5px;top:8px" width="7" height="13" viewBox="0 0 7 13" shape-rendering="crispEdges"><path d="M3 0h1v1h1v1h1v1h-5v-1h1v-1h1z" fill="#585858"/><path d="M1 9h5v1h-1v1h-1v1h-1v-1h-1v-1h-1z" fill="#585858"/></svg></div>
<div class="abs lb" style="left:1143px;top:139px;">Overlap: 0%</div>
<div class="abs lb" style="right:257px;top:172px;">Time span</div>
<div class="abs combo" style="left:1020px;top:169px;width:114px;height:23px"><span class="abs" style="left:4.3px;top:2px;line-height:20px">Auto</span><svg class="abs" style="right:5px;top:8px" width="7" height="13" viewBox="0 0 7 13" shape-rendering="crispEdges"><path d="M3 0h1v1h1v1h1v1h-5v-1h1v-1h1z" fill="#585858"/><path d="M1 9h5v1h-1v1h-1v1h-1v-1h-1v-1h-1z" fill="#585858"/></svg></div>
<div class="abs lb" style="left:1143px;top:172px;letter-spacing:-0.6px">Res: - s</div>
<div class="abs lb" style="right:257px;top:206px;letter-spacing:0.37px">Averaging</div>
<div class="abs grv" style="left:1022px;top:213px;width:113px"></div>
<div class="abs grf" style="left:1022px;top:213px;width:76px"></div>
<svg class="abs" style="left:1091px;top:206px" width="14" height="21" viewBox="0 0 14 21"><path d="M1.500 5.500q0-5 5-5h1q5 0 5 5v8.500l-5.500 5.500-5.500-5.500z" fill="url(#gH)" stroke="#9e9b95" stroke-width="1"/><path d="M2.500 6q0-4.500 4.500-4.500q4.500 0 4.500 4.500" fill="none" stroke="#fff" stroke-width="1" opacity=".9"/><path d="M5 7.500h4M5 9.500h4M5 11.500h4" stroke="#b3b0aa" stroke-width="1"/></svg>
<div class="abs lb" style="right:257px;top:241px;letter-spacing:0.28px">Pandapter</div>
<div class="abs grv" style="left:1022px;top:248px;width:113px"></div>
<div class="abs grf" style="left:1022px;top:248px;width:24px"></div>
<svg class="abs" style="left:1039px;top:241px" width="14" height="21" viewBox="0 0 14 21"><path d="M1.500 5.500q0-5 5-5h1q5 0 5 5v8.500l-5.500 5.500-5.500-5.500z" fill="url(#gH)" stroke="#9e9b95" stroke-width="1"/><path d="M2.500 6q0-4.500 4.500-4.500q4.500 0 4.500 4.500" fill="none" stroke="#fff" stroke-width="1" opacity=".9"/><path d="M5 7.500h4M5 9.500h4M5 11.500h4" stroke="#b3b0aa" stroke-width="1"/></svg>
<div class="abs lb" style="left:1143px;top:241px;">WF</div>
<div class="abs lb" style="right:257px;top:278px;">Peak</div>
<div class="abs btn" style="left:1020px;top:273px;width:116px;height:28px;line-height:28px">Detect</div>
<div class="abs btn" style="left:1142px;top:273px;width:115px;height:28px;line-height:28px">Hold</div>
<div class="abs lb" style="right:257px;top:315px;">Ref. level</div>
<div class="abs grv" style="left:1022px;top:322px;width:113px"></div>
<div class="abs grf" style="left:1022px;top:322px;width:63px"></div>
<svg class="abs" style="left:1078px;top:315px" width="14" height="21" viewBox="0 0 14 21"><path d="M1.500 5.500q0-5 5-5h1q5 0 5 5v8.500l-5.500 5.500-5.500-5.500z" fill="url(#gH)" stroke="#9e9b95" stroke-width="1"/><path d="M2.500 6q0-4.500 4.500-4.500q4.500 0 4.500 4.500" fill="none" stroke="#fff" stroke-width="1" opacity=".9"/><path d="M5 7.500h4M5 9.500h4M5 11.500h4" stroke="#b3b0aa" stroke-width="1"/></svg>
<div class="abs lb" style="left:1143px;top:315px;">-43 dB</div>
<div class="abs lb" style="right:257px;top:350px;">dB range</div>
<div class="abs grv" style="left:1022px;top:357px;width:113px"></div>
<div class="abs grf" style="left:1022px;top:357px;width:31px"></div>
<svg class="abs" style="left:1046px;top:350px" width="14" height="21" viewBox="0 0 14 21"><path d="M1.500 5.500q0-5 5-5h1q5 0 5 5v8.500l-5.500 5.500-5.500-5.500z" fill="url(#gH)" stroke="#9e9b95" stroke-width="1"/><path d="M2.500 6q0-4.500 4.500-4.500q4.500 0 4.500 4.500" fill="none" stroke="#fff" stroke-width="1" opacity=".9"/><path d="M5 7.500h4M5 9.500h4M5 11.500h4" stroke="#b3b0aa" stroke-width="1"/></svg>
<div class="abs lb" style="left:1143px;top:350px;">58 dB</div>
<div class="abs lb" style="right:257px;top:385px;">Zoom</div>
<div class="abs grv" style="left:1022px;top:392px;width:113px"></div>
<svg class="abs" style="left:1021px;top:385px" width="14" height="21" viewBox="0 0 14 21"><path d="M1.500 5.500q0-5 5-5h1q5 0 5 5v8.500l-5.500 5.500-5.500-5.500z" fill="url(#gH)" stroke="#9e9b95" stroke-width="1"/><path d="M2.500 6q0-4.500 4.500-4.500q4.500 0 4.500 4.500" fill="none" stroke="#fff" stroke-width="1" opacity=".9"/><path d="M5 7.500h4M5 9.500h4M5 11.500h4" stroke="#b3b0aa" stroke-width="1"/></svg>
<div class="abs lb" style="left:1143px;top:385px;">1x</div>
<div class="abs btn" style="left:943px;top:416px;width:101px;height:28px;line-height:28px">R</div>
<div class="abs btn" style="left:1050px;top:416px;width:100px;height:28px;line-height:28px">C</div>
<div class="abs btn" style="left:1156px;top:416px;width:101px;height:28px;line-height:28px">D</div>
<div class="abs lb" style="left:977px;top:459px;">Color</div>
<div class="abs" style="left:1049px;top:463px;width:10px;height:10px;border:1px solid #9a9a9a;background:#97d097"></div>
<div class="abs lb" style="left:1066px;top:459px;">Green</div>
<div class="abs btn" style="left:1144px;top:454px;width:113px;height:28px;line-height:28px">Fill</div>
<div class="abs" style="left:929px;top:543px;width:3px;height:1px;background:#d0cdc8;box-shadow:0 2px 0 #d0cdc8,0 4px 0 #d0cdc8"></div>
<div class="abs" style="left:1098px;top:662px;width:1px;height:3px;background:#cfccc7;box-shadow:2px 0 0 #cfccc7,4px 0 0 #cfccc7"></div>
<div class="abs" style="left:933px;top:632px;width:336px;height:1px;background:#aba8a2"></div>
<div class="abs tab" style="left:933px;top:633px;width:107px;height:25px;border-radius:0 0 0 4px"><span style="letter-spacing:0.45px">Input controls</span></div>
<div class="abs tab" style="left:1041px;top:633px;width:128px;height:25px;border-radius:0 0 4px 0"><span style="letter-spacing:0.2px">Receiver Options</span></div>
<div class="abs tabsel" style="left:1171px;top:633px;width:96px;height:27px"><span>FFT Settings</span></div>
<div class="abs lb" style="left:935px;top:671px;">Audio</div>
<svg class="abs" style="left:1237px;top:674px" width="31" height="13" viewBox="0 0 31 13"><rect x="1.500" y="1.500" width="10" height="10" rx="1.500" fill="#f5f4f3" stroke="#5e5d57" stroke-width="1"/><rect x="5.500" y="3.500" width="4" height="4" rx="1" fill="none" stroke="#55544f" stroke-width="1"/><rect x="3.500" y="5.500" width="4" height="4" rx="1" fill="#f5f4f3" stroke="#55544f" stroke-width="1"/><rect x="18.500" y="1.500" width="10" height="10" rx="1.500" fill="#f5f4f3" stroke="#5e5d57" stroke-width="1"/><path d="M20.900 3.900l5.200 5.200M26.100 3.900l-5.200 5.200" stroke="#55544f" stroke-width="2"/></svg>
<svg class="abs" style="left:942px;top:702px" width="318" height="216" viewBox="942 702 318 216"><rect x="942" y="702" width="318" height="216" fill="url(#pbg2)"/><defs><linearGradient id="pbg2" x1="0" y1="0" x2="0" y2="1"><stop offset="0" stop-color="#2f2f2f"/><stop offset="1" stop-color="#000"/></linearGradient></defs><line x1="981.5" y1="702" x2="981.5" y2="904" class="grid"/><text transform="translate(980.9,915) scale(1,.93)" text-anchor="middle" class="pl">1.5</text><line x1="1021.5" y1="702" x2="1021.5" y2="904" class="grid"/><text transform="translate(1020.8,915) scale(1,.93)" text-anchor="middle" class="pl">3.0</text><line x1="1061.5" y1="702" x2="1061.5" y2="904" class="grid"/><text transform="translate(1060.6,915) scale(1,.93)" text-anchor="middle" class="pl">4.5</text><line x1="1101.5" y1="702" x2="1101.5" y2="904" class="grid"/><text transform="translate(1100.5,915) scale(1,.93)" text-anchor="middle" class="pl">6.0</text><line x1="1140.5" y1="702" x2="1140.5" y2="904" class="grid"/><text transform="translate(1140.3,915) scale(1,.93)" text-anchor="middle" class="pl">7.5</text><line x1="1180.5" y1="702" x2="1180.5" y2="904" class="grid"/><text transform="translate(1180.2,915) scale(1,.93)" text-anchor="middle" class="pl">9.0</text><line x1="1220.5" y1="702" x2="1220.5" y2="904" class="grid"/><text transform="translate(1220.0,915) scale(1,.93)" text-anchor="middle" class="pl">10.5</text><line x1="977" y1="729.5" x2="1260" y2="729.5" class="grid"/><text transform="translate(968.5,733.2) scale(1,.93)" text-anchor="end" class="pl">-31</text><line x1="977" y1="756.5" x2="1260" y2="756.5" class="grid"/><text transform="translate(968.5,760.2) scale(1,.93)" text-anchor="end" class="pl">-42</text><line x1="977" y1="783.5" x2="1260" y2="783.5" class="grid"/><text transform="translate(968.5,787.2) scale(1,.93)" text-anchor="end" class="pl">-53</text><line x1="977" y1="810.5" x2="1260" y2="810.5" class="grid"/><text transform="translate(968.5,814.2) scale(1,.93)" text-anchor="end" class="pl">-64</text><line x1="977" y1="837.5" x2="1260" y2="837.5" class="grid"/><text transform="translate(968.5,841.2) scale(1,.93)" text-anchor="end" class="pl">-75</text><line x1="977" y1="864.5" x2="1260" y2="864.5" class="grid"/><text transform="translate(968.5,868.2) scale(1,.93)" text-anchor="end" class="pl">-86</text><line x1="977" y1="891.5" x2="1260" y2="891.5" class="grid"/><text transform="translate(968.5,895.2) scale(1,.93)" text-anchor="end" class="pl">-97</text></svg>
<div class="abs lb" style="left:943px;top:929px;">Gain:</div>
<div class="abs grv" style="left:985px;top:936px;width:220px"></div>
<div class="abs grf" style="left:985px;top:936px;width:125px"></div>
<svg class="abs" style="left:1103px;top:929px" width="14" height="21" viewBox="0 0 14 21"><path d="M1.500 5.500q0-5 5-5h1q5 0 5 5v8.500l-5.500 5.500-5.500-5.500z" fill="url(#gH)" stroke="#9e9b95" stroke-width="1"/><path d="M2.500 6q0-4.500 4.500-4.500q4.500 0 4.500 4.500" fill="none" stroke="#fff" stroke-width="1" opacity=".9"/><path d="M5 7.500h4M5 9.500h4M5 11.500h4" stroke="#b3b0aa" stroke-width="1"/></svg>
<div class="abs lb" style="right:11px;top:929px;">-5.3 dB</div>
<div class="abs btn" style="left:943px;top:960px;width:75px;height:28px;line-height:28px">UDP</div>
<div class="abs btn" style="left:1022px;top:960px;width:76px;height:28px;line-height:28px">Rec</div>
<div class="abs btn dis" style="left:1102px;top:960px;width:75px;height:28px;line-height:28px">Play</div>
<div class="abs btn" style="left:1181px;top:960px;width:76px;height:28px;line-height:28px">...</div>
<div class="abs lb" style="left:1001.5px;width:200px;text-align:center;top:996px;font-style:italic;letter-spacing:-0.8px">DSP</div>
<div class="abs" style="left:1px;top:1023px;width:1268px;height:1px;background:#cbc8c2"></div><div class="abs" style="left:1px;top:1024px;width:1268px;height:1px;background:#fcfcfb"></div>
<svg class="abs" style="left:0;top:0;pointer-events:none" width="1270" height="1046"><rect x="1265" y="1033" width="1" height="1" fill="#fff"/><rect x="1266" y="1032" width="1" height="1" fill="#b9b6b0"/><rect x="1265" y="1036" width="1" height="1" fill="#fff"/><rect x="1266" y="1035" width="1" height="1" fill="#b9b6b0"/><rect x="1262" y="1036" width="1" height="1" fill="#fff"/><rect x="1263" y="1035" width="1" height="1" fill="#b9b6b0"/><rect x="1265" y="1039" width="1" height="1" fill="#fff"/><rect x="1266" y="1038" width="1" height="1" fill="#b9b6b0"/><rect x="1262" y="1039" width="1" height="1" fill="#fff"/><rect x="1263" y="1038" width="1" height="1" fill="#b9b6b0"/><rect x="1259" y="1039" width="1" height="1" fill="#fff"/><rect x="1260" y="1038" width="1" height="1" fill="#b9b6b0"/><rect x="1265" y="1042" width="1" height="1" fill="#fff"/><rect x="1266" y="1041" width="1" height="1" fill="#b9b6b0"/><rect x="1262" y="1042" width="1" height="1" fill="#fff"/><rect x="1263" y="1041" width="1" height="1" fill="#b9b6b0"/><rect x="1259" y="1042" width="1" height="1" fill="#fff"/><rect x="1260" y="1041" width="1" height="1" fill="#b9b6b0"/><rect x="1256" y="1042" width="1" height="1" fill="#fff"/><rect x="1257" y="1041" width="1" height="1" fill="#b9b6b0"/></svg>
<div class="abs" style="left:0;top:28px;width:1px;height:1018px;background:linear-gradient(#3c3b37 0,#a8a49c 110px)"></div><div class="abs" style="left:1269px;top:28px;width:1px;height:1018px;background:linear-gradient(#3c3b37 0,#a8a49c 110px)"></div><div class="abs" style="left:1268px;top:29px;width:1px;height:600px;background:#fbfbfa"></div><div class="abs" style="left:0;top:1045px;width:1270px;height:1px;background:#a8a49c"></div>
</body></html>
